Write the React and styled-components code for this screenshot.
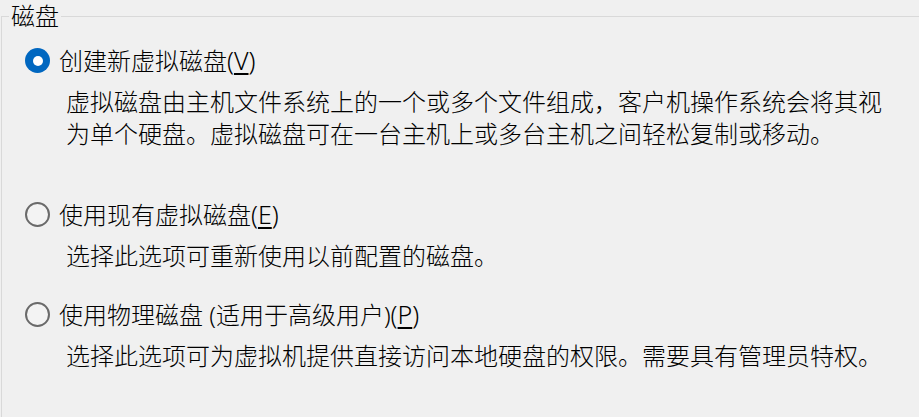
import styled, { createGlobalStyle } from 'styled-components';

const GlobalStyle = createGlobalStyle`
  html, body {
    margin: 0;
    padding: 0;
    background: #f0f0f0;
  }
  body {
    font-family: "Noto Sans", "Noto Sans CJK SC", sans-serif;
    font-weight: 300;
    color: #000;
  }
`;

const Group = styled.fieldset`
  box-sizing: border-box;
  margin: 0 0 0 1px;
  padding: 0;
  min-height: 100vh;
  border: 1px solid #d9d9d9;
  border-right: none;
  border-bottom: none;
  min-width: 0;
`;

const Legend = styled.legend`
  margin-left: 7px;
  padding: 0 2px;
  font-size: 24px;
  line-height: 32px;
`;

const Options = styled.div`
  display: flex;
  flex-direction: column;
  padding-left: 23px;
`;

const Option = styled.div`
  display: flex;
  flex-direction: column;
  margin-top: ${p => p.$top}px;
`;

const Row = styled.label`
  display: flex;
  align-items: center;
  gap: 9px;
  font-size: 24px;
  line-height: 32px;
  white-space: nowrap;
`;

const Radio = styled.span`
  box-sizing: border-box;
  width: 25px;
  height: 25px;
  border-radius: 50%;
  flex: none;
  display: flex;
  align-items: center;
  justify-content: center;
  ${p => p.$checked
    ? `background: #0067c0;`
    : `border: 2px solid #6a6a6a; background: #f3f3f3;`}

  &::after {
    content: '';
    display: ${p => (p.$checked ? 'block' : 'none')};
    width: 10px;
    height: 10px;
    border-radius: 50%;
    background: #fff;
  }
`;

const Latin = styled.span`
  font-size: 25px;
`;

const Key = styled.span`
  text-decoration: underline;
  text-underline-offset: 3px;
  text-decoration-thickness: 1.5px;
`;

const Desc = styled.p`
  margin: 9px 0 0 41px;
  max-width: 820px;
  font-size: 24px;
  line-height: 32px;
`;

const options = [
  {
    top: 12,
    checked: true,
    label: '创建新虚拟磁盘',
    key: 'V',
    desc: '虚拟磁盘由主机文件系统上的一个或多个文件组成，客户机操作系统会将其视为单个硬盘。虚拟磁盘可在一台主机上或多台主机之间轻松复制或移动。',
  },
  {
    top: 48,
    checked: false,
    label: '使用现有虚拟磁盘',
    key: 'E',
    desc: '选择此选项可重新使用以前配置的磁盘。',
  },
  {
    top: 26,
    checked: false,
    label: '使用物理磁盘 (适用于高级用户)',
    key: 'P',
    desc: '选择此选项可为虚拟机提供直接访问本地硬盘的权限。需要具有管理员特权。',
  },
];

export default function App() {
  return (
    <>
      <GlobalStyle />
      <Group>
        <Legend>磁盘</Legend>
        <Options>
          {options.map(o => (
            <Option key={o.key} $top={o.top}>
              <Row>
                <Radio $checked={o.checked} />
                <span>
                  {o.label}
                  <Latin>
                    (<Key>{o.key}</Key>)
                  </Latin>
                </span>
              </Row>
              <Desc>{o.desc}</Desc>
            </Option>
          ))}
        </Options>
      </Group>
    </>
  );
}
